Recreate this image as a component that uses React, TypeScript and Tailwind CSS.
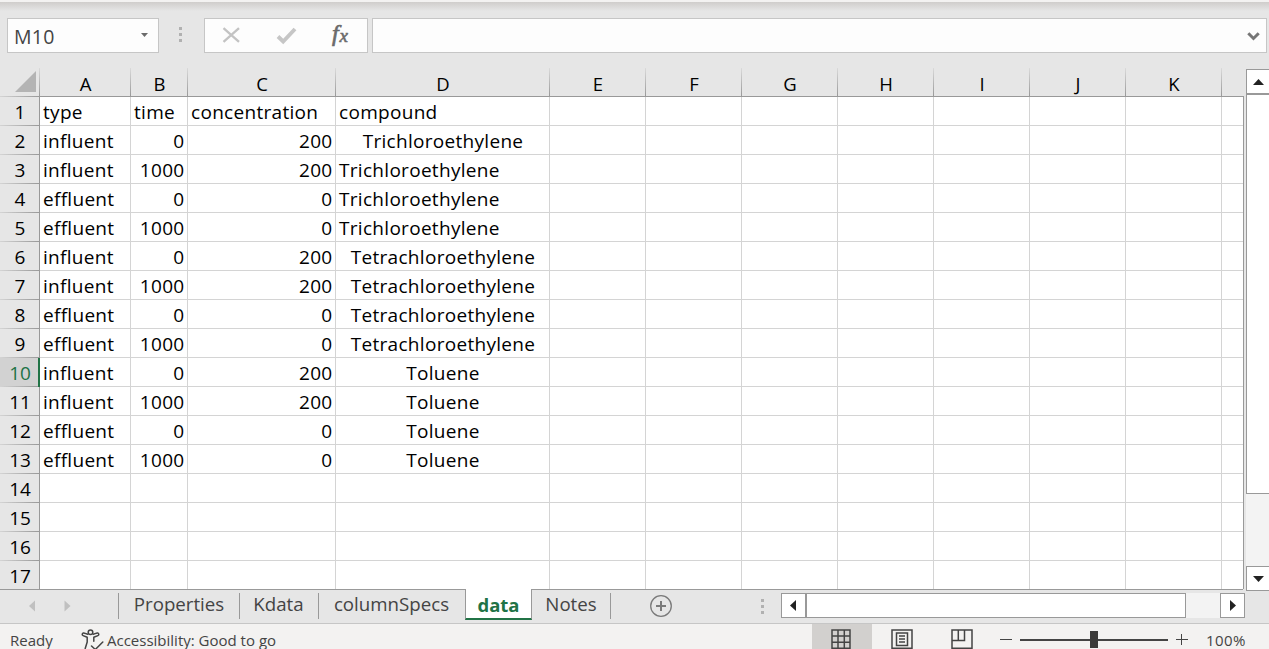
import React from "react";

const columns = [
  { name: "A", width: "w-[91px]" },
  { name: "B", width: "w-[57px]" },
  { name: "C", width: "w-[148px]" },
  { name: "D", width: "w-[214px]" },
  { name: "E", width: "w-[96px]" },
  { name: "F", width: "w-[96px]" },
  { name: "G", width: "w-[96px]" },
  { name: "H", width: "w-[96px]" },
  { name: "I", width: "w-[96px]" },
  { name: "J", width: "w-[96px]" },
  { name: "K", width: "w-[96px]" },
];

type Row = [string, string, string, string];

const rows: Row[] = [
  ["type", "time", "concentration", "compound"],
  ["influent", "0", "200", "Trichloroethylene"],
  ["influent", "1000", "200", "Trichloroethylene"],
  ["effluent", "0", "0", "Trichloroethylene"],
  ["effluent", "1000", "0", "Trichloroethylene"],
  ["influent", "0", "200", "Tetrachloroethylene"],
  ["influent", "1000", "200", "Tetrachloroethylene"],
  ["effluent", "0", "0", "Tetrachloroethylene"],
  ["effluent", "1000", "0", "Tetrachloroethylene"],
  ["influent", "0", "200", "Toluene"],
  ["influent", "1000", "200", "Toluene"],
  ["effluent", "0", "0", "Toluene"],
  ["effluent", "1000", "0", "Toluene"],
];

const SELECTED_ROW = 10;

function Dots() {
  return (
    <div className="flex flex-col gap-[3px]">
      <i className="size-[3px] bg-[#b1b1b1]" />
      <i className="size-[3px] bg-[#b1b1b1]" />
      <i className="size-[3px] bg-[#b1b1b1]" />
    </div>
  );
}

function FormulaBar() {
  return (
    <div className="flex h-[66px] shrink-0 flex-col bg-[#e6e6e6]">
      <div className="h-[2px] bg-[#f3f2f1]" />
      <div className="h-[9px] bg-linear-to-b from-[#cfcdcb] to-[#e6e6e6]" />
      <div className="mt-[7px] flex h-[35px] pr-[2px] pl-[7px]">
        <div className="flex w-[152px] items-center justify-between border border-[#c6c6c6] bg-[#fdfdfd] pr-[10px] pl-[6px]">
          <span className="pt-[2px] text-[19.5px] leading-[31px] tracking-[0.3px] text-[#444]">M10</span>
          <svg width="7" height="4" viewBox="0 0 7 4" className="-translate-y-px"><path d="M0 0h7L3.5 4z" fill="#6b6b6b" /></svg>
        </div>
        <div className="flex w-[45px] items-center pb-[2px] pl-[20px]"><Dots /></div>
        <div className="flex w-[164px] items-center border border-[#c6c6c6] bg-[#fdfdfd]">
          <svg width="162" height="33" viewBox="205 19 162 33">
            <path d="M223.5 28.2 239 41.8M239 28.2 223.5 41.8" stroke="#c3c3c3" strokeWidth="2.3" fill="none" />
            <path d="m278 36.5 5.2 5L295 29" stroke="#c6c6c6" strokeWidth="3.9" fill="none" />
            <text x="332" y="41" fill="#6b6b6b" stroke="#6b6b6b" strokeWidth="0.7" fontFamily="Liberation Serif, serif" fontStyle="italic" fontSize="24">f</text>
            <text x="339.500" y="42" fill="#6b6b6b" stroke="#6b6b6b" strokeWidth="0.6" fontFamily="Liberation Serif, serif" fontStyle="italic" fontSize="19">x</text>
          </svg>
        </div>
        <div className="ml-[4px] flex flex-1 items-center justify-end border border-[#c6c6c6] bg-[#fdfdfd] pt-[2px] pr-[6px]">
          <svg width="13" height="9" viewBox="0 0 13 9"><path d="m1.3 1.3 5.2 5.2 5.2-5.2" stroke="#767676" strokeWidth="3" fill="none" /></svg>
        </div>
      </div>
    </div>
  );
}

function ColumnHeaders() {
  return (
    <div className="flex h-[31px]">
      <div className="flex w-[39px] flex-col justify-end">
        <svg width="39" height="28" viewBox="0 0 39 28"><path d="M36 3v21H15z" fill="#b4b4b4" /></svg>
        <div className="h-px bg-linear-to-r from-[#d4d4d4] to-[#999]" />
      </div>
      <div className="mt-[2px] w-px bg-linear-to-b from-[#dadada] to-[#999]" />
      <div className="flex flex-1 border-b border-[#999]">
        {columns.map((c) => (
          <div key={c.name} className={`${c.width} flex shrink-0`}>
            <span className="flex-1 pt-[4px] pl-px text-center text-[18.5px] leading-[27px]">{c.name}</span>
            <i className="mt-[2px] w-px bg-linear-to-b from-[#dadada] to-[#999]" />
          </div>
        ))}
      </div>
    </div>
  );
}

function GridRow({ n }: { n: number }) {
  const row = rows[n - 1];
  const selected = n === SELECTED_ROW;
  const numeric = n === 1 ? "justify-start pl-[3px]" : "justify-end pr-[2.5px]";
  const compound = n === 1 || (n > 2 && n < 6) ? "justify-start pl-[3px]" : "justify-center pl-px";
  const aligned = ["justify-start pl-[3px]", numeric, numeric, compound];
  return (
    <div className="flex h-[29px] shrink-0">
      <div className={`flex flex-col ${selected ? "w-[38px] bg-[#d2d2d2] text-[#217346]" : "w-[39px] bg-[#e6e6e6]"}`}>
        <span className={`min-h-0 flex-1 text-center text-[19px] leading-[31px] ${selected ? "pl-[2px]" : "pl-px"}`}>{n}</span>
        <i className="h-px bg-linear-to-r from-[#d4d4d4] to-[#999]" />
      </div>
      <div className={selected ? "w-[2px] bg-[#217346]" : "w-px bg-[#999]"} />
      {columns.map((c, i) => (
        <div
          key={c.name}
          className={`${c.width} ${row && i < 4 ? aligned[i] : ""} flex shrink-0 border-r border-b border-[#d4d4d4] text-[19px] leading-[31px] tracking-[0.3px] whitespace-nowrap`}
        >
          {row && i < 4 ? row[i] : ""}
        </div>
      ))}
      <div className="flex-1 border-b border-[#d4d4d4]" />
    </div>
  );
}

function VerticalScroll() {
  return (
    <div className="-mb-[2px] flex w-[23px] flex-col pt-[3px]">
      <div className="flex h-[26px] items-center justify-center border border-r-0 border-b-2 border-[#999] bg-white pl-px">
        <svg width="11" height="6" viewBox="0 0 11 6"><path d="M5.5 0 11 6H0z" fill="#222" /></svg>
      </div>
      <div className="h-[399px] border border-t-0 border-r-0 border-[#999] bg-white" />
      <div className="flex-1 bg-[#f3f3f3]" />
      <div className="flex h-[25px] items-center justify-center border border-r-0 border-[#999] bg-white pl-px">
        <svg width="11" height="6" viewBox="0 0 11 6"><path d="M0 0h11L5.500 6z" fill="#222" /></svg>
      </div>
    </div>
  );
}

function SheetTabs() {
  const tab = "flex h-[26px] mt-[3px] items-center justify-center border-r border-[#999] pb-[4px] text-[18.7px] text-[#444]";
  return (
    <div className="flex h-[35px] shrink-0 border-b border-[#c6c6c6]">
      <div className="flex w-[465px] border-t border-[#999]">
        <div className="mt-[3px] flex h-[26px] w-[119px] items-center gap-[28px] border-r border-[#999] pl-[29px]">
          <svg width="7" height="12" viewBox="0 0 7 12"><path d="M6 .5v11L0 6z" fill="#c0c0c0" /></svg>
          <svg width="7" height="12" viewBox="0 0 7 12"><path d="M.5.5v11l6-5.500z" fill="#c0c0c0" /></svg>
        </div>
        <div className={`${tab} w-[121px]`}><span>Properties</span></div>
        <div className={`${tab} w-[79px] pr-px`}><span>Kdata</span></div>
        <div className="mt-[3px] flex h-[26px] flex-1 items-center justify-center pr-px pb-[4px] text-[18.7px] text-[#444]"><span>columnSpecs</span></div>
      </div>
      <div className="flex h-[31px] w-[67px] items-center justify-center border-x border-b-2 border-x-[#999] border-b-[#217346] bg-white pt-[2px] text-[18.5px] font-bold text-[#217346]">
        <span>data</span>
      </div>
      <div className="flex flex-1 border-t border-[#999]">
        <div className={`${tab} w-[79px]`}><span>Notes</span></div>
        <svg width="24" height="24" viewBox="0 0 24 24" className="mt-[4px] ml-[38px]" fill="none" stroke="#7a7a7a">
          <circle cx="12" cy="12" r="10.300" strokeWidth="1.300" />
          <path d="M12 7v10M7 12h10" strokeWidth="2" />
        </svg>
      </div>
      <div className="flex w-[483px] border-t border-[#999]">
        <div className="flex w-[21px] shrink-0 items-center pb-px pl-px"><Dots /></div>
        <div className="mt-[3px] flex h-[25px] shrink-0">
          <div className="flex w-[26px] items-center justify-center border border-r-2 border-[#999] bg-white pr-px">
            <svg width="6" height="11" viewBox="0 0 6 11"><path d="M6 0v11L0 5.500z" fill="#222" /></svg>
          </div>
          <div className="w-[379px] border border-l-0 border-[#999] bg-white" />
          <div className="w-[34px] bg-[#f3f3f3]" />
          <div className="flex w-[25px] items-center justify-center border border-[#999] bg-white">
            <svg width="6" height="11" viewBox="0 0 6 11"><path d="M0 0v11l6-5.500z" fill="#222" /></svg>
          </div>
        </div>
      </div>
      <div className="w-[26px]" />
    </div>
  );
}

function StatusBar() {
  return (
    <div className="flex h-[25px] shrink-0 overflow-hidden bg-[#f3f2f1] text-[15px] leading-[32px] text-[#444]">
      <span className="ml-[10px] w-[71px]">Ready</span>
      <svg width="24" height="25" viewBox="81 624 24 25" fill="none" stroke="#444" strokeWidth="1.500" strokeLinecap="round" strokeLinejoin="round">
        <circle cx="90.500" cy="632.200" r="2.300" />
        <path d="M87.800 634.200c-1.800-.4-3.300-1.400-4.500-1.100-1.300.3-1.500 2-.2 2.500l4.100 1.700v4.700l-2 6.500M93.200 634.200c1.800-.4 3.300-1.400 4.500-1.100 1.300.3 1.500 2 .2 2.500l-4.100 1.700v4" />
        <path d="m91.500 646 3.800 3.500 7.500-7.500" />
      </svg>
      <span className="ml-[2px] flex-1 whitespace-nowrap">Accessibility: Good to go</span>
      <div className="w-[60px] bg-[#d2d0ce]">
        <svg width="60" height="25" viewBox="812 624 60 25" fill="none" stroke="#444" strokeWidth="1.500">
          <path d="M832 630h18v18.300h-18zM838 630v19M844.300 630v19M832 636h18M832 642.300h18" />
        </svg>
      </div>
      <svg width="128" height="25" viewBox="872 624 128 25" fill="none" stroke="#444" strokeWidth="1.500">
        <path d="M892 630h20v18.300h-20zM896.500 633h11v12.500h-11zM899 636h6M899 639h6M899 642h6" />
        <path d="M952 630h20v18.300h-20zM958.300 630v10.500M964.500 630v10.500H952" />
      </svg>
      <svg width="200" height="25" viewBox="1000 624 200 25" fill="none" stroke="#444">
        <path d="M1000 639.500h12M1176 639.500h12M1181.500 634v11" />
        <path d="M1020 640h148" strokeWidth="2" />
        <path d="M1094 631v17" strokeWidth="8" stroke="#3b3a39" />
      </svg>
      <span className="w-[69px] pl-[6px] tracking-[0.4px]">100%</span>
    </div>
  );
}

export default function App() {
  return (
    <div className="flex h-[649px] w-[1269px] flex-col overflow-hidden bg-[#e6e6e6] font-['Open_Sans','Noto_Sans',sans-serif] text-black">
      <FormulaBar />
      <div className="flex h-[523px] shrink-0">
        <div className="flex w-[1244px] flex-col">
          <ColumnHeaders />
          <div className="flex h-[492px] flex-col overflow-hidden border-r border-[#999] bg-white">
            {Array.from({ length: 17 }, (_, i) => (
              <GridRow key={i} n={i + 1} />
            ))}
          </div>
        </div>
        <div className="w-[2px]" />
        <VerticalScroll />
      </div>
      <SheetTabs />
      <StatusBar />
    </div>
  );
}
